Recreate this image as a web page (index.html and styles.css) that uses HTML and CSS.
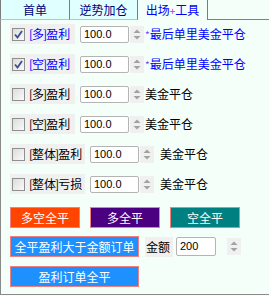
FILE: index.html
```html
<!DOCTYPE html>
<html>
  <head>
    <title>出场+工具</title>
    <link rel="stylesheet" href="styles.css">
  </head>
  <body>
    <div class="window">
      <div class="tabs">
        <div class="tab first">首单</div>
        <div class="tab second">逆势加仓</div>
        <div class="tab active">出场<span class="plus">+</span>工具</div>
        <div class="tab-rest"></div>
      </div>
      <div class="panel">
        <div class="options">
          <div class="row">
            <label class="check">
              <span class="box"><svg width="11" height="11" viewBox="0 0 11 11"><polyline points="2,5.5 4.5,8.5 9,2" fill="none" stroke="#3b4f8f" stroke-width="1.8"/></svg></span>
              <span class="text blue"><span class="br">[</span>多<span class="br">]</span>盈利</span>
            </label>
            <span class="field">100.0</span>
            <span class="spin"><svg width="14" height="17" viewBox="0 0 14 17"><polygon points="3.5,7 7,3.5 10.5,7" fill="#a2a2a2"/><polygon points="3.5,10 7,13.5 10.5,10" fill="#a2a2a2"/></svg></span>
            <span class="note blue"><span class="star">*</span>最后单里美金平仓</span>
          </div>
          <div class="row">
            <label class="check">
              <span class="box"><svg width="11" height="11" viewBox="0 0 11 11"><polyline points="2,5.5 4.5,8.5 9,2" fill="none" stroke="#3b4f8f" stroke-width="1.8"/></svg></span>
              <span class="text blue"><span class="br">[</span>空<span class="br">]</span>盈利</span>
            </label>
            <span class="field">100.0</span>
            <span class="spin"><svg width="14" height="17" viewBox="0 0 14 17"><polygon points="3.5,7 7,3.5 10.5,7" fill="#a2a2a2"/><polygon points="3.5,10 7,13.5 10.5,10" fill="#a2a2a2"/></svg></span>
            <span class="note blue"><span class="star">*</span>最后单里美金平仓</span>
          </div>
          <div class="row">
            <label class="check">
              <span class="box"></span>
              <span class="text"><span class="br">[</span>多<span class="br">]</span>盈利</span>
            </label>
            <span class="field">100.0</span>
            <span class="spin"><svg width="14" height="17" viewBox="0 0 14 17"><polygon points="3.5,7 7,3.5 10.5,7" fill="#a2a2a2"/><polygon points="3.5,10 7,13.5 10.5,10" fill="#a2a2a2"/></svg></span>
            <span class="note">美金平仓</span>
          </div>
          <div class="row">
            <label class="check">
              <span class="box"></span>
              <span class="text"><span class="br">[</span>空<span class="br">]</span>盈利</span>
            </label>
            <span class="field">100.0</span>
            <span class="spin"><svg width="14" height="17" viewBox="0 0 14 17"><polygon points="3.5,7 7,3.5 10.5,7" fill="#a2a2a2"/><polygon points="3.5,10 7,13.5 10.5,10" fill="#a2a2a2"/></svg></span>
            <span class="note">美金平仓</span>
          </div>
          <div class="row">
            <label class="check wide">
              <span class="box"></span>
              <span class="text"><span class="br">[</span>整体<span class="br">]</span>盈利</span>
            </label>
            <span class="field">100.0</span>
            <span class="spin"><svg width="14" height="17" viewBox="0 0 14 17"><polygon points="3.5,7 7,3.5 10.5,7" fill="#a2a2a2"/><polygon points="3.5,10 7,13.5 10.5,10" fill="#a2a2a2"/></svg></span>
            <span class="note spaced">美金平仓</span>
          </div>
          <div class="row">
            <label class="check wide">
              <span class="box"></span>
              <span class="text"><span class="br">[</span>整体<span class="br">]</span>亏损</span>
            </label>
            <span class="field">100.0</span>
            <span class="spin"><svg width="14" height="17" viewBox="0 0 14 17"><polygon points="3.5,7 7,3.5 10.5,7" fill="#a2a2a2"/><polygon points="3.5,10 7,13.5 10.5,10" fill="#a2a2a2"/></svg></span>
            <span class="note spaced">美金平仓</span>
          </div>
        </div>
        <div class="actions">
          <div class="btn-row">
            <button class="btn red">多空全平</button>
            <button class="btn indigo">多全平</button>
            <button class="btn teal">空全平</button>
          </div>
          <div class="btn-row">
            <button class="btn blue-btn long">全平盈利大于金额订单</button>
            <span class="amount-label">金额</span>
            <span class="field small">200</span>
            <span class="spin"><svg width="14" height="17" viewBox="0 0 14 17"><polygon points="3.5,7 7,3.5 10.5,7" fill="#a2a2a2"/><polygon points="3.5,10 7,13.5 10.5,10" fill="#a2a2a2"/></svg></span>
          </div>
          <div class="btn-row last">
            <button class="btn blue-btn long">盈利订单全平</button>
          </div>
        </div>
      </div>
    </div>
  </body>
</html>
```

FILE: styles.css
```css
* {
  box-sizing: border-box;
}
body {
  margin: 0;
  background: #f5fffa;
  font-family: "Noto Sans CJK SC", sans-serif;
  font-size: 12px;
}
.window {
  width: 269px;
  height: 296px;
}
.tabs {
  display: flex;
  height: 20px;
}
.tab {
  height: 20px;
  line-height: 19px;
  text-align: center;
  background: #e0ffff;
  color: #000080;
  border-right: 1px solid #7c7c7c;
  border-bottom: 1px solid #b8c4c4;
}
.tab.first {
  width: 70px;
  border-left: 1px solid #7c7c7c;
}
.tab.second {
  width: 68px;
}
.tab.active {
  width: 70px;
  background: #f5fffa;
  color: #0000ff;
  border-bottom: none;
}
.plus {
  color: #b13ccf;
  font-size: 10px;
}
.tab-rest {
  flex: 1;
  border-bottom: 1px solid #808080;
}
.panel {
  height: 275px;
  border-left: 1px solid #8a8a8a;
  border-bottom: 1px solid #8a8a8a;
  padding: 4px 0 0 9px;
}
.options {
  display: flex;
  flex-direction: column;
  gap: 10px;
}
.row {
  display: flex;
  align-items: center;
  height: 20px;
}
.check {
  display: flex;
  align-items: center;
  width: 65px;
  height: 20px;
  padding-left: 2px;
  background: #f0f0f0;
  margin-right: 5px;
}
.check.wide {
  width: 75px;
}
.box {
  display: flex;
  align-items: center;
  justify-content: center;
  width: 13px;
  height: 13px;
  border: 1px solid #8e8f8f;
  background: linear-gradient(135deg, #dcdcdc, #fafafa);
  margin-right: 5px;
}
.text {
  line-height: 20px;
  white-space: nowrap;
}
.br {
  margin: 0 -1px;
}
.blue {
  color: #0000ff;
}
.field {
  width: 49px;
  height: 17px;
  padding-left: 3px;
  background: #fff;
  border: 1px solid #b4b4b4;
  border-radius: 2px;
  font-family: "Liberation Sans", sans-serif;
  font-size: 11px;
  line-height: 15px;
  color: #000;
}
.field.small {
  width: 40px;
  height: 19px;
  line-height: 17px;
}
.spin {
  display: flex;
  width: 14px;
  height: 17px;
  margin-left: 1px;
  background: #f0f0f0;
}
.note {
  margin-left: 1px;
  white-space: nowrap;
  line-height: 20px;
}
.note.spaced {
  margin-left: 6px;
}
.star {
  color: #7a3cff;
  font-size: 10px;
}
.actions {
  display: flex;
  flex-direction: column;
  gap: 8px;
  margin-top: 13px;
}
.btn-row {
  display: flex;
  align-items: center;
  gap: 10px;
  height: 21px;
}
.btn-row.last {
  margin-top: 1px;
}
.btn {
  width: 70px;
  height: 21px;
  padding: 0;
  border: 1px solid #f08080;
  color: #fff;
  font-family: "Noto Sans CJK SC", sans-serif;
  font-size: 12px;
  line-height: 19px;
  text-align: center;
}
.btn.long {
  width: 129px;
}
.red {
  background: #ff4500;
}
.indigo {
  background: #4b0082;
}
.teal {
  background: #008080;
}
.blue-btn {
  background: #1e90ff;
}
.amount-label {
  width: 28px;
  height: 20px;
  line-height: 20px;
  padding-left: 1px;
  margin-left: -4px;
  margin-right: -7px;
  background: #f0f0f0;
}
```
